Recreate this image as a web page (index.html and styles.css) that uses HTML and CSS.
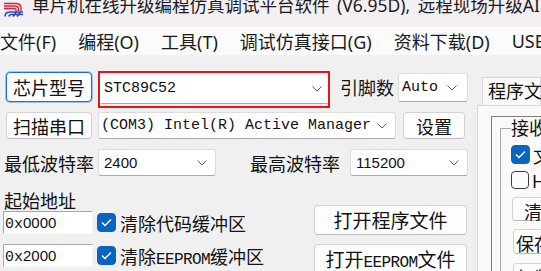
FILE: index.html
```html
<!DOCTYPE html>
<html lang="zh-CN">
<head>
    <meta charset="UTF-8">
    <meta name="viewport" content="width=device-width, initial-scale=1.0">
    <title>STC-ISP</title>
    <link rel="stylesheet" href="styles.css">
</head>
<body>
    <div class="window">
        <!-- Barre de titre -->
        <div class="title-bar">
            <svg class="logo" width="22" height="16" viewBox="0 0 22 16">
                <g fill="none" stroke="#e0203a" stroke-width="1.4">
                    <path d="M2 2.5 H14 Q19 2.5 19 7 V10"/>
                    <path d="M2 5 H13 Q16.5 5 16.5 8.5 V10"/>
                    <path d="M2 7.5 H12 Q14 7.5 14 9.5 V10"/>
                </g>
                <g fill="none" stroke="#1d4fc4" stroke-width="1.6">
                    <path d="M3 15.5 Q3 11 8.5 11 H21"/>
                    <path d="M7 15.5 Q7 13.5 9.5 13.5 H21"/>
                    <path d="M11 15.5 L14.5 11"/>
                    <path d="M15 15.5 L18.5 11"/>
                </g>
            </svg>
            <span class="title-text">单片机在线升级编程仿真调试平台软件<span class="title-latin"> (V6.95D), </span>远程现场升级AI</span>
        </div>

        <!-- Menu -->
        <div class="menu-bar">
            <span>文件(F)</span>
            <span>编程(O)</span>
            <span>工具(T)</span>
            <span>调试仿真接口(G)</span>
            <span>资料下载(D)</span>
            <span>USB-Link1D(U)</span>
        </div>

        <div class="main">
            <div class="left">
                <div class="row row-chip">
                    <button class="btn btn-focus btn-side">芯片型号</button>
                    <div class="highlight">
                        <div class="combo combo-chip">
                            <span class="combo-text mono">STC89C52</span>
                            <svg class="chevron" width="10" height="6" viewBox="0 0 10 6"><path d="M0.5 0.5 L5 5 L9.5 0.5" fill="none" stroke="#5f5f5f"/></svg>
                        </div>
                    </div>
                    <span class="label label-pins">引脚数</span>
                    <div class="combo combo-auto">
                        <span class="combo-text mono">Auto</span>
                        <svg class="chevron" width="10" height="6" viewBox="0 0 10 6"><path d="M0.5 0.5 L5 5 L9.5 0.5" fill="none" stroke="#5f5f5f"/></svg>
                    </div>
                </div>

                <div class="row row-port">
                    <button class="btn btn-side btn-scan">扫描串口</button>
                    <div class="combo combo-port">
                        <span class="combo-text mono">(COM3) Intel(R) Active Manager</span>
                        <svg class="chevron" width="10" height="6" viewBox="0 0 10 6"><path d="M0.5 0.5 L5 5 L9.5 0.5" fill="none" stroke="#5f5f5f"/></svg>
                    </div>
                    <button class="btn btn-set">设置</button>
                </div>

                <div class="row row-baud">
                    <span class="label label-min">最低波特率</span>
                    <div class="combo combo-baud">
                        <span class="combo-text num">2400</span>
                        <svg class="chevron" width="10" height="6" viewBox="0 0 10 6"><path d="M0.5 0.5 L5 5 L9.5 0.5" fill="none" stroke="#5f5f5f"/></svg>
                    </div>
                    <span class="label label-max">最高波特率</span>
                    <div class="combo combo-baud">
                        <span class="combo-text num">115200</span>
                        <svg class="chevron" width="10" height="6" viewBox="0 0 10 6"><path d="M0.5 0.5 L5 5 L9.5 0.5" fill="none" stroke="#5f5f5f"/></svg>
                    </div>
                </div>

                <div class="bottom">
                    <div class="addr-col">
                        <div class="label addr-title">起始地址</div>
                        <div class="addr-row">
                            <div class="addr-input"><span class="mono">0x</span><span class="num">0000</span></div>
                            <span class="check checked">
                                <svg width="19" height="19" viewBox="0 0 19 19"><path d="M5 9.5 L8 12.5 L14 6.5" fill="none" stroke="#fff" stroke-width="1.4"/></svg>
                            </span>
                            <span class="label">清除代码缓冲区</span>
                        </div>
                        <div class="addr-row addr-row-2">
                            <div class="addr-input"><span class="mono">0x</span><span class="num">2000</span></div>
                            <span class="check checked">
                                <svg width="19" height="19" viewBox="0 0 19 19"><path d="M5 9.5 L8 12.5 L14 6.5" fill="none" stroke="#fff" stroke-width="1.4"/></svg>
                            </span>
                            <span class="label">清除<span class="mono mono-caps">EEPROM</span>缓冲区</span>
                        </div>
                    </div>
                    <div class="file-col">
                        <button class="btn btn-file">打开程序文件</button>
                        <button class="btn btn-file">打开<span class="mono mono-caps">EEPROM</span>文件</button>
                    </div>
                </div>
            </div>

            <!-- Panneau de droite (onglets) -->
            <div class="right">
                <div class="tab-head">程序文件</div>
                <div class="tab-page">
                    <div class="inner-panel">
                        <fieldset class="group">
                            <legend>接收缓冲区</legend>
                            <div class="opt-row">
                                <span class="check checked">
                                    <svg width="19" height="19" viewBox="0 0 19 19"><path d="M5 9.5 L8 12.5 L14 6.5" fill="none" stroke="#fff" stroke-width="1.4"/></svg>
                                </span>
                                <span class="label">文本模式</span>
                            </div>
                            <div class="opt-row opt-row-2">
                                <span class="check"></span>
                                <span class="label">HEX模式</span>
                            </div>
                            <button class="btn btn-small btn-clear">清空接收区</button>
                            <button class="btn btn-small btn-save">保存接收数据</button>
                            <button class="btn btn-small btn-copy">复制接收数据</button>
                        </fieldset>
                    </div>
                </div>
            </div>
        </div>
    </div>
</body>
</html>
```

FILE: styles.css
```css
body {
    margin: 0;
    background-color: #f0f0f0;
    font-family: "Noto Sans", "Noto Sans CJK SC", sans-serif;
    color: #111;
    overflow: hidden;
}
.window {
    width: 541px;
    height: 271px;
    overflow: hidden;
}
.title-bar {
    display: flex;
    align-items: flex-start;
    height: 27px;
    background-color: #f3eff3;
    white-space: nowrap;
    overflow: hidden;
}
.logo {
    margin: 1px 0 0 2px;
    flex-shrink: 0;
}
.title-text {
    margin: -4px 0 0 8px;
    font-size: 17.5px;
    line-height: 18px;
    color: #1b1b1b;
}
.title-latin {
    word-spacing: 3px;
}
.menu-bar {
    display: flex;
    align-items: center;
    gap: 22px;
    height: 28px;
    background-color: #fbfbfb;
    font-size: 18px;
    color: #1a1a1a;
    white-space: nowrap;
    overflow: hidden;
}
.main {
    display: flex;
    height: 216px;
}
.left {
    width: 477px;
    flex-shrink: 0;
    padding-top: 16px;
}
.row {
    display: flex;
}
.row-chip {
    align-items: flex-start;
    height: 37px;
}
.row-port {
    margin-top: 4px;
    height: 27px;
}
.row-baud {
    align-items: center;
    margin-top: 10px;
    height: 27px;
}
.mono {
    font-family: "Liberation Mono", monospace;
    font-size: 15px;
}
.mono-caps {
    font-size: 16px;
    letter-spacing: -0.6px;
}
.num {
    font-family: "Liberation Sans", sans-serif;
    font-size: 15px;
}
.label {
    font-size: 18px;
    white-space: nowrap;
}
.btn {
    font-family: inherit;
    font-size: 18px;
    color: #111;
    background-color: #fdfdfd;
    border: 1px solid #d3d3d3;
    border-bottom-color: #bcbcbc;
    border-radius: 4px;
    padding: 0;
    white-space: nowrap;
}
.btn-focus {
    border: 1px solid #1a6fd0;
    box-shadow: 0 0 0 1px rgba(26, 111, 208, 0.35);
}
.btn-side {
    margin-left: 6px;
    width: 86px;
}
.row-chip .btn-side {
    margin-top: 1px;
    height: 30px;
}
.btn-scan {
    height: 27px;
}
.btn-set {
    margin-left: 7px;
    width: 62px;
    height: 27px;
}
.highlight {
    margin-left: 6px;
    width: 232px;
    height: 37px;
    box-sizing: border-box;
    border: 2px solid #e8141c;
}
.combo {
    display: flex;
    align-items: center;
    box-sizing: border-box;
    background-color: #fff;
    border: 1px solid #dcdcdc;
    border-bottom-color: #a9a9a9;
    border-radius: 3px;
    padding: 0 8px 0 3px;
    overflow: hidden;
}
.combo-text {
    flex: 1;
    white-space: nowrap;
    overflow: hidden;
}
.chevron {
    flex-shrink: 0;
    margin-left: 4px;
}
.combo-chip {
    height: 31px;
    padding-right: 5px;
    border-radius: 0;
    border-color: #fff;
    border-bottom-color: #a9a9a9;
}
.label-pins {
    margin: 2px 0 0 10px;
    line-height: 30px;
}
.combo-auto {
    margin: 2px 0 0 4px;
    width: 70px;
    height: 29px;
    padding-right: 10px;
}
.combo-port {
    margin-left: 6px;
    width: 298px;
    height: 27px;
    padding-left: 2px;
}
.label-min {
    margin-left: 4px;
    width: 94px;
}
.label-max {
    margin-left: 34px;
    width: 100px;
}
.combo-baud {
    width: 118px;
    height: 27px;
    padding-left: 5px;
}
.bottom {
    display: flex;
}
.addr-title {
    margin: 15px 0 0 4px;
    line-height: 20px;
}
.addr-row {
    display: flex;
    align-items: center;
    height: 23px;
}
.addr-row-2 {
    margin-top: 10px;
}
.addr-input {
    margin-left: 3px;
    width: 90px;
    height: 23px;
    box-sizing: border-box;
    background-color: #fff;
    border: 1px solid #f6f6f6;
    border-top-color: #a8a8a8;
    border-left-color: #a8a8a8;
    padding-left: 1px;
    line-height: 21px;
    white-space: nowrap;
}
.check {
    display: inline-block;
    width: 19px;
    height: 19px;
    box-sizing: border-box;
    border: 1px solid #3c3c3c;
    border-radius: 4px;
    background-color: #fbfbfb;
    flex-shrink: 0;
}
.check.checked {
    background-color: #0a64c2;
    border-color: #0a64c2;
}
.check svg {
    display: block;
    margin: -1px;
}
.addr-row .check {
    margin: 0 4px 0 4px;
}
.file-col {
    display: flex;
    flex-direction: column;
    gap: 9px;
    margin: 29px 10px 0 auto;
}
.btn-file {
    width: 153px;
    height: 30px;
    font-size: 19px;
}
.right {
    flex: 1;
    padding-top: 22px;
    overflow: hidden;
}
.tab-head {
    margin-left: 5px;
    height: 28px;
    box-sizing: border-box;
    border: 1px solid #d9d9d9;
    border-bottom: none;
    background-color: #f9f9f9;
    padding-left: 5px;
    font-size: 18px;
    line-height: 27px;
    white-space: nowrap;
}
.tab-page {
    height: 200px;
    border-top: 1px solid #d9d9d9;
    border-left: 1px solid #d9d9d9;
    background-color: #f9f9f9;
    padding: 10px 0 0 13px;
}
.inner-panel {
    height: 200px;
    border-top: 1px solid #7c7c7c;
    border-left: 1px solid #7c7c7c;
    padding-left: 8px;
}
.group {
    margin: 0;
    padding: 0 0 0 10px;
    border: 1px solid #a8a8a8;
    border-right: none;
    border-bottom: none;
    min-width: 0;
    white-space: nowrap;
}
.group legend {
    padding: 0;
    font-size: 18px;
    line-height: 22px;
}
.opt-row {
    display: flex;
    align-items: center;
    gap: 3px;
    margin-top: 6px;
    height: 19px;
}
.opt-row-2 {
    margin-top: 6px;
}
.opt-row-2 .check {
    width: 18px;
    height: 18px;
}
.btn-small {
    display: block;
    height: 24px;
    width: 110px;
    font-size: 18px;
    text-align: left;
    padding-left: 11px;
}
.btn-clear {
    margin: 8px 0 0 1px;
}
.btn-save {
    margin: 8px 0 0 2px;
    height: 25px;
    padding-left: 2px;
}
.btn-copy {
    margin: 9px 0 0 2px;
    padding-left: 2px;
}
```
